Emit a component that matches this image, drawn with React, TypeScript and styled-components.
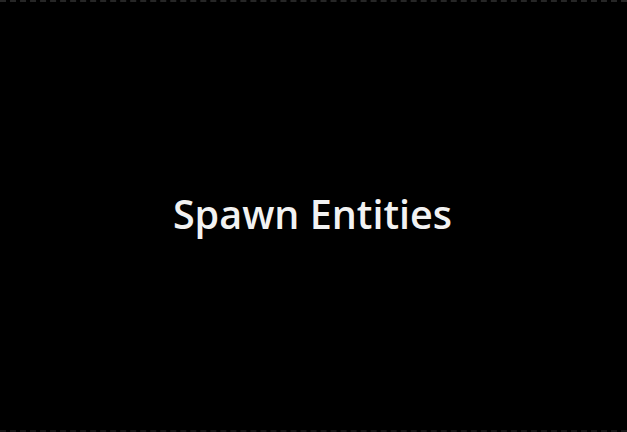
import React from "react";
import styled, { createGlobalStyle } from "styled-components";

const GlobalStyle = createGlobalStyle`
  html, body {
    margin: 0;
    padding: 0;
    background: #000;
  }
`;

const Screen = styled.div`
  box-sizing: border-box;
  width: 627px;
  height: 432px;
  background: #000;
  border-top: 2px dashed #262626;
  border-bottom: 2px dashed #161616;
  display: flex;
  align-items: center;
  justify-content: center;
`;

const Title = styled.h1`
  margin: 0 2px 4px 0;
  font-family: "Open Sans", "Noto Sans", sans-serif;
  font-weight: 600;
  font-size: 39.5px;
  color: #f2f2f2;
  letter-spacing: 0;
`;

export default function App() {
  return (
    <>
      <GlobalStyle />
      <Screen>
        <Title>Spawn Entities</Title>
      </Screen>
    </>
  );
}
